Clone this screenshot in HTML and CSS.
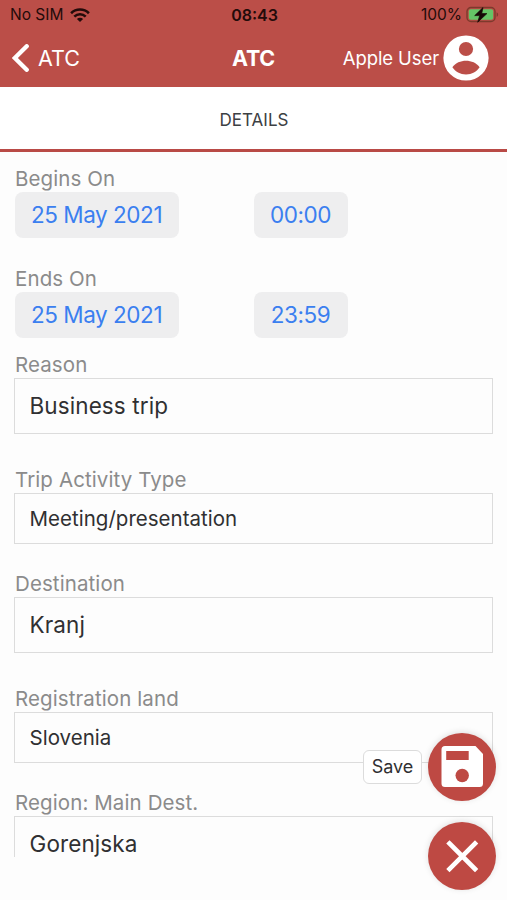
FILE: index.html
```html
<!DOCTYPE html>
<html lang="en">
<head>
<meta charset="utf-8">
<meta name="viewport" content="width=device-width, initial-scale=1">
<title>ATC</title>
<link rel="stylesheet" href="styles.css">
</head>
<body>
<div class="app">
  <header class="header">
    <div class="status">
      <div class="carrier"><span>No SIM</span>
        <svg class="wifi" viewBox="0 0 20 14"><g fill="none" stroke="#230b0a" stroke-width="2.6"><path d="M1.1 5.2a12.7 12.7 0 0 1 17.8 0"/><path d="M4.3 8.6a8.1 8.1 0 0 1 11.4 0"/></g><path d="M6.9 11.1a4.4 4.4 0 0 1 6.2 0L10 14z" fill="#230b0a"/></svg>
      </div>
      <div class="clock">08:43</div>
      <div class="power"><span>100%</span>
        <svg class="battery" viewBox="0 0 33 17"><rect x="1" y="1.5" width="28" height="14" rx="4" fill="none" stroke="#7d3a2c" stroke-width="1.4"/><rect x="2.8" y="3.3" width="24.4" height="10.4" rx="2" fill="#65c466"/><path d="M30.600 6.200c2 .8 2 3.800 0 4.600z" fill="#7d3a2c"/><path d="M17 1.600 8.700 9.600h5l-2 6.600 9.200-8.600h-5.200z" fill="#160706" stroke="#160706" stroke-width=".7" stroke-linejoin="round"/></svg>
      </div>
    </div>
    <nav class="nav">
      <a class="back"><svg viewBox="0 0 18 28"><path d="M14.700 2.300 2.800 14l11.900 11.700" fill="none" stroke="#fff" stroke-width="4.400" stroke-linecap="round"/></svg><span>ATC</span></a>
      <h1 class="title">ATC</h1>
      <div class="user"><span>Apple User</span>
        <svg viewBox="0 0 46 46"><circle cx="23" cy="23" r="22.6" fill="#fff"/><circle cx="23" cy="14" r="7.1" fill="#bb4e48"/><path d="M9.400 32.300c2.900-4.400 8.400-6.500 13.600-6.500s10.700 2.100 13.600 6.500C33.700 36.700 28.900 39.500 23 39.500S12.300 36.700 9.400 32.300z" fill="#bb4e48"/></svg>
      </div>
    </nav>
  </header>
  <div class="tabs"><span class="tab">DETAILS</span></div>
  <main class="form">
    <section class="moment">
      <div class="label">Begins On</div>
      <div class="pickers"><span class="pill date">25 May 2021</span><span class="pill time">00:00</span></div>
    </section>
    <section class="moment last">
      <div class="label">Ends On</div>
      <div class="pickers"><span class="pill date">25 May 2021</span><span class="pill time">23:59</span></div>
    </section>
    <section class="field"><div class="label">Reason</div><div class="input large">Business trip</div></section>
    <section class="field compact"><div class="label">Trip Activity Type</div><div class="input">Meeting/presentation</div></section>
    <section class="field"><div class="label">Destination</div><div class="input large">Kranj</div></section>
    <section class="field compact"><div class="label">Registration land</div><div class="input">Slovenia</div></section>
    <section class="field"><div class="label">Region: Main Dest.</div><div class="input large">Gorenjska</div></section>
  </main>
  <div class="actions">
    <div class="action"><span class="hint">Save</span>
      <button class="fab" aria-label="Save"><svg viewBox="0 0 68 68"><path d="M17 13h30.500l7.500 8v29.500a3.500 3.500 0 0 1-3.500 3.500H17a3.500 3.500 0 0 1-3.500-3.500v-34A3.500 3.500 0 0 1 17 13z" fill="#fff"/><path d="M18.200 18h22.500v9H18.200z" fill="#be4943"/><circle cx="34.200" cy="42.500" r="6.700" fill="#be4943"/></svg></button>
    </div>
    <div class="action">
      <button class="fab" aria-label="Close"><svg viewBox="0 0 68 68"><path d="M21.500 21.500l25.500 25.500M47 21.500l-25.500 25.500" fill="none" stroke="#fff" stroke-width="4.600" stroke-linecap="square"/></svg></button>
    </div>
  </div>
</div>
</body>
</html>
```
FILE: styles.css
```css
* { box-sizing: border-box; }
body { margin: 0; background: #fdfdfd; font-family: Inter, "Liberation Sans", sans-serif; color: #303032; }
svg { display: block; flex: none; }
.app { position: relative; width: 507px; height: 900px; overflow: hidden; }

.header { height: 87px; background: #bb4e48; color: #fff; }
.status { display: grid; grid-template-columns: 1fr auto 1fr; align-items: center; height: 29px; padding: 0 8px 0 10px; color: #230b0a; font-size: 15.500px; }
.carrier, .power { display: flex; align-items: center; }
.carrier { gap: 7px; }
.power { justify-content: flex-end; gap: 4px; }
.wifi { width: 20px; height: 14px; }
.battery { width: 33px; height: 17px; }
.clock { font-weight: 600; font-size: 16px; }
.nav { display: grid; grid-template-columns: 1fr auto 1fr; align-items: center; height: 58px; padding: 0 18px 0 12px; }
.back { display: flex; align-items: center; gap: 8px; font-size: 21.500px; }
.back svg { width: 18px; height: 28px; }
.title { margin: 0; padding-left: 6px; font-size: 21.500px; font-weight: 650; letter-spacing: -.2px; }
.user { display: flex; justify-content: flex-end; align-items: center; gap: 4px; font-size: 18.500px; letter-spacing: -.1px; white-space: nowrap; }
.user svg { width: 46px; height: 46px; }

.tabs { display: flex; align-items: center; justify-content: center; height: 65px; border-bottom: 3px solid #b94a46; background: #fff; font-size: 17px; color: #3c4043; padding: 3px 0 0 1px; }

.form { height: 705px; overflow: hidden; padding: 14px 14px 0 14px; }
.label { height: 26px; line-height: 26px; color: #8b8b8b; font-size: 20.500px; letter-spacing: .1px; padding-left: 1px; white-space: nowrap; }
.moment { height: 99.500px; }
.moment.last { height: 86.500px; }
.pickers { display: grid; grid-template-columns: 239px 1fr; padding-left: .5px; }
.pill { display: flex; justify-content: center; align-items: center; height: 46px; padding-bottom: 1px; border-radius: 8px; background: #eeeeef; color: #3b7ff0; font-size: 22.500px; letter-spacing: -.45px; white-space: nowrap; }
.date { width: 164px; }
.time { width: 94px; }
.field { margin-bottom: 33px; }
.field.compact { margin-bottom: 27px; }
.input { display: flex; align-items: center; height: 51px; border: 1.500px solid #dcdcdc; padding: 0 0 1px 14.500px; font-size: 20.500px; letter-spacing: .02px; white-space: nowrap; }
.input.large { height: 56px; font-size: 22.500px; letter-spacing: .1px; }

.actions { position: absolute; right: 11px; top: 732.500px; display: flex; flex-direction: column; align-items: flex-end; gap: 21px; }
.action { display: flex; align-items: center; gap: 6px; }
.hint { display: flex; align-items: center; justify-content: center; width: 59px; height: 34px; border: 1px solid #dcdcdc; border-radius: 6px; background: #fff; font-size: 18px; }
.fab { display: block; width: 68px; height: 68px; padding: 0; border: 0; border-radius: 50%; background: #be4943; box-shadow: 0 -1px 6px rgba(0, 0, 0, .12); }
```
